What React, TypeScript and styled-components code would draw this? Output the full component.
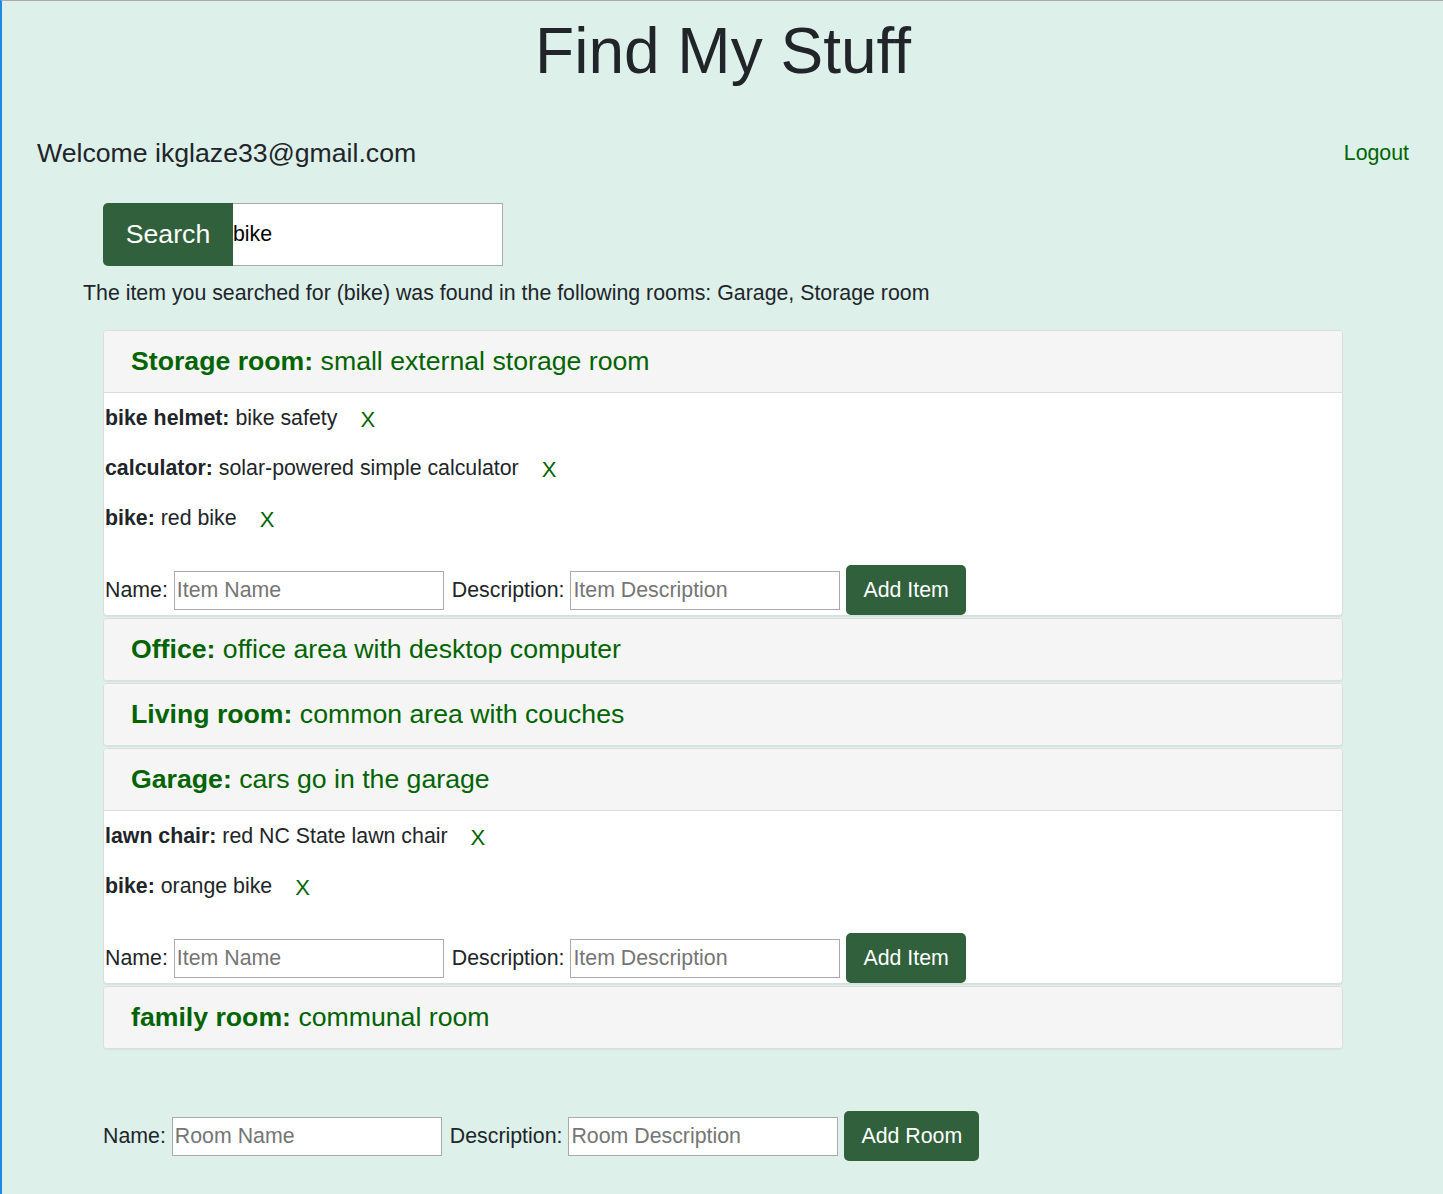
import styled, { createGlobalStyle } from "styled-components";

const GlobalStyle = createGlobalStyle`
  html, body {
    margin: 0;
    padding: 0;
  }
  body {
    background: #ddf1ea;
    font-family: "Liberation Sans", Arial, sans-serif;
    color: #212529;
    border-top: 1px solid #aaaaaa;
    border-left: 2px solid #1e88e5;
    min-height: 1194px;
    box-sizing: border-box;
  }
`;

const green = "#006400";
const buttonGreen = "#30613c";

interface Item {
  name: string;
  description: string;
}

interface Room {
  name: string;
  description: string;
  items?: Item[];
}

const rooms: Room[] = [
  {
    name: "Storage room",
    description: "small external storage room",
    items: [
      { name: "bike helmet", description: "bike safety" },
      { name: "calculator", description: "solar-powered simple calculator" },
      { name: "bike", description: "red bike" },
    ],
  },
  { name: "Office", description: "office area with desktop computer" },
  { name: "Living room", description: "common area with couches" },
  {
    name: "Garage",
    description: "cars go in the garage",
    items: [
      { name: "lawn chair", description: "red NC State lawn chair" },
      { name: "bike", description: "orange bike" },
    ],
  },
  { name: "family room", description: "communal room" },
];

const Page = styled.div`
  padding: 0 34px 0 35px;
`;

const Title = styled.h1`
  margin: 0;
  padding-top: 10px;
  font-size: 64px;
  font-weight: 400;
  line-height: 80px;
  text-align: center;
  color: #212529;
`;

const TopBar = styled.div`
  display: flex;
  justify-content: space-between;
  align-items: center;
  margin-top: 47px;
`;

const Welcome = styled.div`
  font-size: 26.67px;
`;

const LogoutLink = styled.a`
  font-size: 21.33px;
  color: ${green};
  text-decoration: none;
  cursor: pointer;
`;

const SearchForm = styled.form`
  display: flex;
  margin: 34px 0 0 66px;
  height: 63px;
`;

const SearchButton = styled.button`
  width: 130px;
  border: none;
  border-radius: 5px 0 0 5px;
  background: ${buttonGreen};
  color: #fff;
  font-family: inherit;
  font-size: 26.67px;
`;

const SearchInput = styled.input`
  width: 270px;
  box-sizing: border-box;
  border: 1px solid #aaa;
  border-left: none;
  padding: 0;
  font-family: inherit;
  font-size: 21.33px;
  color: #000;
  outline: none;
`;

const ResultText = styled.p`
  margin: 15px 0 0 46px;
  font-size: 21.33px;
  line-height: 24px;
`;

const RoomList = styled.div`
  margin: 25px 66px 0 66px;
  display: flex;
  flex-direction: column;
  gap: 2px;
`;

const Panel = styled.div`
  background: #fff;
  border: 1px solid #dddddd;
  border-radius: 4px;
  box-shadow: 0 1px 1px rgba(0, 0, 0, 0.05);
  overflow: hidden;
`;

const PanelHeading = styled.div<{ $open: boolean }>`
  height: 61px;
  display: flex;
  align-items: center;
  padding: 0 27px;
  background: #f5f5f5;
  border-bottom: ${(p) => (p.$open ? "1px solid #dddddd" : "none")};
  font-size: 26.67px;
  color: ${green};
`;

const ItemList = styled.ul`
  margin: 0;
  padding: 0;
  list-style: none;
`;

const ItemRow = styled.li`
  height: 50px;
  display: flex;
  align-items: center;
  padding-left: 1px;
  font-size: 21.33px;
  color: #212529;
`;

const DeleteButton = styled.button`
  margin-left: 23px;
  border: none;
  background: none;
  padding: 0;
  margin-top: 3px;
  color: ${green};
  font-family: inherit;
  font-size: 22px;
  cursor: pointer;
`;

const AddForm = styled.form<{ $inset?: boolean }>`
  display: flex;
  align-items: center;
  gap: 6px;
  padding-left: ${(p) => (p.$inset ? "1px" : "0")};
  font-size: 21.33px;
  color: #212529;
`;

const PanelForm = styled(AddForm)`
  margin-top: 22px;
`;

const RoomForm = styled(AddForm)`
  margin: 62px 0 0 66px;
`;

const FieldLabel = styled.label`
  display: flex;
  align-items: center;
  gap: 6px;
  & + & {
    margin-left: 2px;
  }
`;

const TextInput = styled.input`
  width: 270px;
  height: 39px;
  box-sizing: border-box;
  border: 1px solid #aaa;
  padding: 0 2px;
  font-family: inherit;
  font-size: 21.33px;
  &::placeholder {
    color: #757575;
  }
`;

const AddButton = styled.button`
  height: 50px;
  padding: 0 17px;
  border: none;
  border-radius: 5px;
  background: ${buttonGreen};
  color: #fff;
  font-family: inherit;
  font-size: 21.33px;
`;

function RoomPanel({ room }: { room: Room }) {
  const open = !!room.items;
  return (
    <Panel>
      <PanelHeading $open={open}>
        <span>
          <b>{room.name}:</b> {room.description}
        </span>
      </PanelHeading>
      {open && (
        <>
          <ItemList>
            {room.items!.map((item, i) => (
              <ItemRow key={i}>
                <span>
                  <b>{item.name}:</b> {item.description}
                </span>
                <DeleteButton type="button">X</DeleteButton>
              </ItemRow>
            ))}
          </ItemList>
          <PanelForm $inset onSubmit={(e) => e.preventDefault()}>
            <FieldLabel>
              Name:
              <TextInput placeholder="Item Name" />
            </FieldLabel>
            <FieldLabel>
              Description:
              <TextInput placeholder="Item Description" />
            </FieldLabel>
            <AddButton type="submit">Add Item</AddButton>
          </PanelForm>
        </>
      )}
    </Panel>
  );
}

export default function App() {
  return (
    <>
      <GlobalStyle />
      <Page>
        <Title>Find My Stuff</Title>
        <TopBar>
          <Welcome>Welcome ikglaze33@gmail.com</Welcome>
          <LogoutLink>Logout</LogoutLink>
        </TopBar>
        <SearchForm onSubmit={(e) => e.preventDefault()}>
          <SearchButton type="submit">Search</SearchButton>
          <SearchInput defaultValue="bike" />
        </SearchForm>
        <ResultText>
          The item you searched for (bike) was found in the following rooms:
          Garage, Storage room
        </ResultText>
        <RoomList>
          {rooms.map((room) => (
            <RoomPanel key={room.name} room={room} />
          ))}
        </RoomList>
        <RoomForm onSubmit={(e) => e.preventDefault()}>
          <FieldLabel>
            Name:
            <TextInput placeholder="Room Name" />
          </FieldLabel>
          <FieldLabel>
            Description:
            <TextInput placeholder="Room Description" />
          </FieldLabel>
          <AddButton type="submit">Add Room</AddButton>
        </RoomForm>
      </Page>
    </>
  );
}
